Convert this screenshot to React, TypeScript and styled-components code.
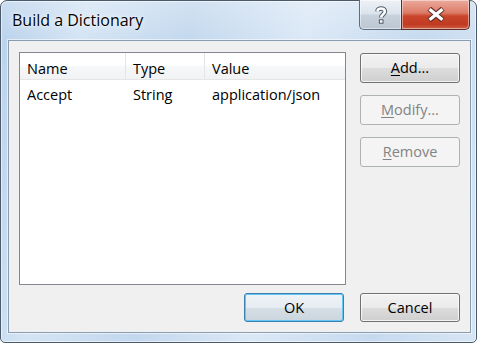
import React, { FC } from "react";
import styled, { createGlobalStyle } from "styled-components";

const GlobalStyle = createGlobalStyle`
  html, body {
    margin: 0;
    padding: 0;
    background: #ffffff;
  }

  body {
    font-family: "Open Sans", "Noto Sans", "DejaVu Sans", sans-serif;
    font-size: 14.5px;
    color: #000000;
  }
`;

type Row = { name: string; type: string; value: string };

const rows: Row[] = [{ name: "Accept", type: "String", value: "application/json" }];

const HelpGlyph: FC = () => (
  <svg width="14" height="20" viewBox="0 0 14 20">
    <path
      d="M3.5 6.2 C3.5 2.6 10.8 2.4 10.8 6.4 C10.8 9.2 7.2 9.6 7.2 12.6"
      fill="none"
      stroke="#4f5b68"
      strokeWidth="4.6"
      strokeLinecap="butt"
    />
    <rect x="4.9" y="14.3" width="4.6" height="4.4" fill="#4f5b68" />
    <path
      d="M3.5 6.2 C3.5 2.6 10.8 2.4 10.8 6.4 C10.8 9.2 7.2 9.6 7.2 12.6"
      fill="none"
      stroke="#ffffff"
      strokeWidth="2.6"
      strokeLinecap="butt"
    />
    <rect x="5.9" y="15.3" width="2.6" height="2.4" fill="#ffffff" />
  </svg>
);

const CloseGlyph: FC = () => (
  <svg width="20" height="15" viewBox="0 0 20 15">
    <g stroke="#5a2a22" strokeWidth="5.4" strokeLinecap="butt">
      <line x1="3.2" y1="1.8" x2="16.8" y2="13.2" />
      <line x1="16.8" y1="1.8" x2="3.2" y2="13.2" />
    </g>
    <g stroke="#ffffff" strokeWidth="3.4" strokeLinecap="butt">
      <line x1="3.6" y1="2.3" x2="16.4" y2="12.7" />
      <line x1="16.4" y1="2.3" x2="3.6" y2="12.7" />
    </g>
  </svg>
);

const App: FC = () => {
  return (
    <>
      <GlobalStyle />
      <Window>
        <TitleBar>
          <Title>Build a Dictionary</Title>
          <CaptionButtons>
            <HelpButton>
              <HelpGlyph />
            </HelpButton>
            <CloseButton>
              <CloseGlyph />
            </CloseButton>
          </CaptionButtons>
        </TitleBar>

        <Client>
          <MainRow>
            <ListView>
              <HeaderRow>
                <HeaderCell>Name</HeaderCell>
                <HeaderCell>Type</HeaderCell>
                <HeaderCell $last>Value</HeaderCell>
              </HeaderRow>
              {rows.map((row) => (
                <ItemRow key={row.name}>
                  <ItemCell>{row.name}</ItemCell>
                  <ItemCell>{row.type}</ItemCell>
                  <ItemCell>{row.value}</ItemCell>
                </ItemRow>
              ))}
            </ListView>

            <SideButtons>
              <Button>
                <u>A</u>dd...
              </Button>
              <Button disabled>
                <u>M</u>odify...
              </Button>
              <Button disabled>
                <u>R</u>emove
              </Button>
            </SideButtons>
          </MainRow>

          <Footer>
            <Button $default $short>
              OK
            </Button>
            <Button $short>Cancel</Button>
          </Footer>
        </Client>
      </Window>
    </>
  );
};

export default App;

const Window = styled.div`
  display: flex;
  flex-direction: column;
  box-sizing: border-box;

  width: 477px;
  height: 343px;
  padding: 0 5px 9px 7px;

  border: 1px solid #4b5a6b;
  border-radius: 7px 7px 5px 5px;
  box-shadow: inset 0 0 0 1px rgba(255, 255, 255, 0.55);
  background:
    linear-gradient(180deg, rgba(255, 255, 255, 0.25) 0%, rgba(255, 255, 255, 0) 40px),
    linear-gradient(
      100deg,
      #b9d1eb 0%,
      #d4e4f4 16%,
      #c3d8ee 36%,
      #dbe8f6 58%,
      #c6daef 80%,
      #d6e5f4 100%
    );
`;

const TitleBar = styled.div`
  display: flex;
  justify-content: space-between;
  align-items: flex-start;

  height: 39px;
`;

const Title = styled.div`
  padding-top: 8px;
  margin-left: 4px;

  font-size: 16px;
  line-height: 22px;
  color: #000000;
  text-shadow: 0 0 6px rgba(255, 255, 255, 0.95), 0 0 2px rgba(255, 255, 255, 0.9);
`;

const CaptionButtons = styled.div`
  display: flex;

  margin-top: -1px;
  margin-right: 1px;
`;

const CaptionButton = styled.div`
  display: flex;
  align-items: center;
  justify-content: center;
  box-sizing: border-box;

  height: 30px;

  border: 1px solid #5e6d7f;
  border-top: none;
  box-shadow: inset 0 0 0 1px rgba(255, 255, 255, 0.45);
`;

const HelpButton = styled(CaptionButton)`
  width: 42px;

  border-right: none;
  border-bottom-left-radius: 5px;
  background: linear-gradient(180deg, #eef2f7 0%, #dbe3ec 48%, #c8d2dd 52%, #bcc7d3 100%);
`;

const CloseButton = styled(CaptionButton)`
  width: 69px;

  border-color: #5d2c25;
  border-bottom-right-radius: 5px;
  background: linear-gradient(180deg, #ebaa9c 0%, #dc7a66 45%, #c9462c 55%, #c13a22 85%, #d0614a 100%);
`;

const Client = styled.div`
  display: flex;
  flex-direction: column;
  flex: 1;
  gap: 8px;
  box-sizing: border-box;

  padding: 11px 10px 10px 10px;

  border: 1px solid #8a9cb0;
  box-shadow: 0 0 0 1px rgba(255, 255, 255, 0.55);
  background: #f0f0f0;
`;

const MainRow = styled.div`
  display: flex;
  flex: 1;
  gap: 14px;
`;

const ListView = styled.div`
  display: flex;
  flex-direction: column;
  flex: 1;

  border: 1px solid #828790;
  background: #ffffff;
`;

const HeaderRow = styled.div`
  display: grid;
  grid-template-columns: 106px 79px 1fr;

  height: 26px;

  border-bottom: 1px solid #e5e5e5;
  background: linear-gradient(180deg, #ffffff 0%, #ffffff 45%, #f6f7f8 55%, #f1f2f3 100%);
`;

const HeaderCell = styled.div<{ $last?: boolean }>`
  padding: 5px 0 0 7px;

  line-height: 21px;
  color: #000000;
  border-right: ${(p) => (p.$last ? "none" : "1px solid #e5e5e5")};
`;

const ItemRow = styled.div`
  display: grid;
  grid-template-columns: 106px 79px 1fr;

  height: 26px;
`;

const ItemCell = styled.div`
  padding: 4px 0 0 7px;

  line-height: 21px;
  white-space: nowrap;
`;

const SideButtons = styled.div`
  display: flex;
  flex-direction: column;
  gap: 12px;

  padding-top: 1px;
`;

const Button = styled.button<{ $default?: boolean; $short?: boolean }>`
  box-sizing: border-box;

  width: 100px;
  height: ${(p) => (p.$short ? "29px" : "30px")};
  padding: 0;

  font-family: inherit;
  font-size: 14.5px;
  line-height: 20px;
  color: #000000;

  border: 1px solid ${(p) => (p.$default ? "#3c7fb1" : "#707070")};
  border-radius: 3px;
  box-shadow: inset 0 0 0 1px
    ${(p) => (p.$default ? "#64c6f2" : "rgba(255, 255, 255, 0.75)")};
  background: ${(p) =>
    p.$default
      ? "linear-gradient(180deg, #eef3f7 0%, #e6ecf1 50%, #d6dfe6 50%, #cbd5dd 100%)"
      : "linear-gradient(180deg, #f2f2f2 0%, #ebebeb 50%, #dddddd 50%, #cfcfcf 100%)"};

  u {
    text-decoration-thickness: 1px;
    text-underline-offset: 2px;
  }

  &:disabled {
    color: #838383;
    border-color: #adb2b5;
    box-shadow: none;
    background: #f4f4f4;
  }
`;

const Footer = styled.div`
  display: flex;
  justify-content: flex-end;
  gap: 16px;
`;
